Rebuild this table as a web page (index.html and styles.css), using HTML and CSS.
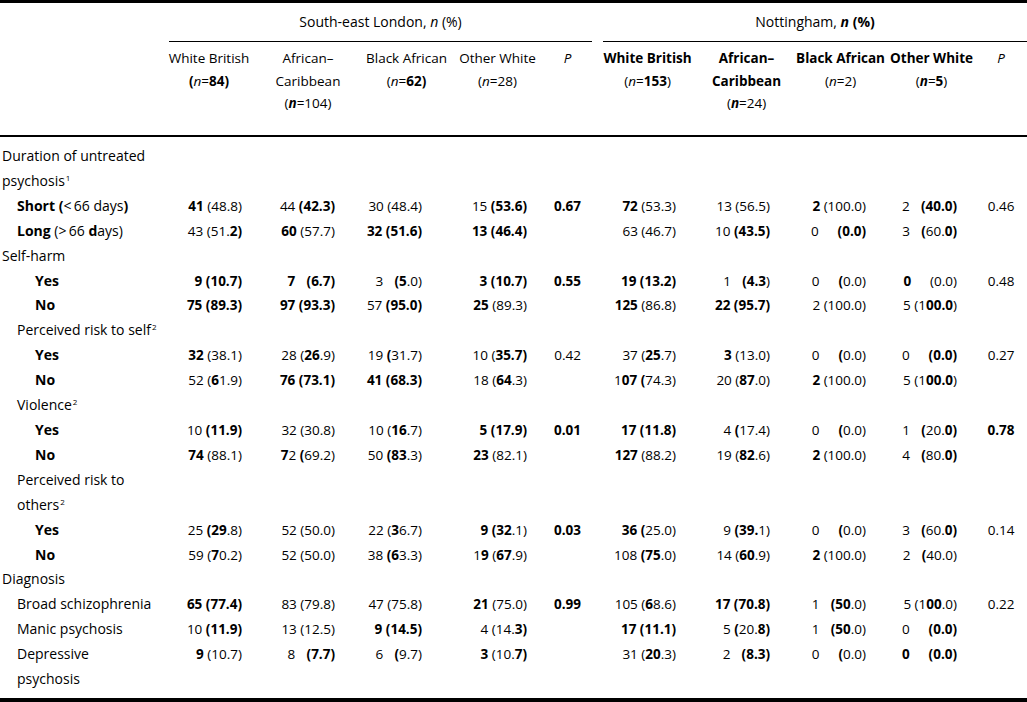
FILE: index.html
```html
<!DOCTYPE html>
<html lang="en">
<head>
<meta charset="utf-8">
<title>Table</title>
<link rel="stylesheet" href="styles.css">
</head>
<body>
<table class="tbl">
  <colgroup>
    <col class="w-lab"><col class="w-s1"><col class="w-s2"><col class="w-s3"><col class="w-s4"><col class="w-sp">
    <col class="w-n1"><col class="w-n2"><col class="w-n3"><col class="w-n4"><col class="w-np">
  </colgroup>
  <thead>
    <tr class="grp">
      <th></th>
      <th colspan="5" class="grp-se"><div class="grp-line">South-east London, <i>n</i> (%)</div></th>
      <th colspan="5" class="grp-nt"><div class="grp-line">Nottingham, <b><i>n</i> (%)</b></div></th>
    </tr>
    <tr class="cols">
      <th></th>
      <th>White British<br><b>(</b><i>n</i>=<b>84)</b></th>
      <th>African–<br>Caribbean<br>(<b><i>n</i></b>=104)</th>
      <th>Black African<br>(<i>n</i>=<b>62)</b></th>
      <th>Other White<br>(<i>n</i>=28)</th>
      <th><i>P</i></th>
      <th><b>White British</b><br>(<i>n</i>=<b>153</b>)</th>
      <th><b>African–</b><br><b>Caribbean</b><br>(<b><i>n</i></b>=24)</th>
      <th><b>Black African</b><br>(<i>n</i>=2)</th>
      <th><b>Other White</b><br>(<b><i>n</i></b>=<b>5</b>)</th>
      <th><i>P</i></th>
    </tr>
  </thead>
  <tbody>
    <tr class="first">
      <td class="lab l1">Duration of untreated<br>psychosis<sup>1</sup></td>
      <td></td><td></td><td></td><td></td><td></td><td></td><td></td><td></td><td></td><td></td>
    </tr>
    <tr>
      <td class="lab l2"><b>Short (</b>&lt;&#8201;66 days<b>)</b></td>
      <td class="s1"><b>41</b> (48.8)</td><td class="s2">44 <b>(42.3)</b></td><td class="s3">30 (48.4)</td><td class="s4">15 <b>(53.6)</b></td><td class="p"><b>0.67</b></td>
      <td class="n1"><b>72</b> (53.3)</td><td class="n2">13 (56.5)</td><td class="n3"><b>2</b> (100.0)</td><td class="n4">2 &#8199;<b>(40.0)</b></td><td class="p">0.46</td>
    </tr>
    <tr>
      <td class="lab l2"><b>Long</b> (&gt;&#8201;66 <b>d</b>ays)</td>
      <td class="s1">43 (51.<b>2)</b></td><td class="s2"><b>60</b> (57.7)</td><td class="s3"><b>32 (51.6)</b></td><td class="s4"><b>13 (46.4)</b></td><td class="p"></td>
      <td class="n1">63 (46.7)</td><td class="n2">10 <b>(43.5)</b></td><td class="n3">0 &#8199;&#8199;<b>(0.0)</b></td><td class="n4">3 &#8199;<b>(</b>60.<b>0)</b></td><td class="p"></td>
    </tr>
    <tr>
      <td class="lab l1">Self-harm</td>
      <td></td><td></td><td></td><td></td><td></td><td></td><td></td><td></td><td></td><td></td>
    </tr>
    <tr>
      <td class="lab l3"><b>Yes</b></td>
      <td class="s1"><b>9 (10.7)</b></td><td class="s2"><b>7 &#8199;(6.7)</b></td><td class="s3">3 &#8199;<b>(5</b>.0)</td><td class="s4"><b>3 (10.7)</b></td><td class="p"><b>0.55</b></td>
      <td class="n1"><b>19 (13.2)</b></td><td class="n2">1 &#8199;<b>(4.3</b>)</td><td class="n3">0 &#8199;&#8199;<b>(</b>0.0)</td><td class="n4"><b>0</b> &#8199;&#8199;(0.0)</td><td class="p">0.48</td>
    </tr>
    <tr>
      <td class="lab l3"><b>No</b></td>
      <td class="s1"><b>75 (89.3)</b></td><td class="s2"><b>97 (93.3)</b></td><td class="s3">57 <b>(95.0)</b></td><td class="s4"><b>25</b> (89.3)</td><td class="p"></td>
      <td class="n1"><b>125</b> (86.8)</td><td class="n2"><b>22 (95.7)</b></td><td class="n3">2 (100.0)</td><td class="n4">5 (1<b>00.0</b>)</td><td class="p"></td>
    </tr>
    <tr>
      <td class="lab l2">Perceived risk to self<sup>2</sup></td>
      <td></td><td></td><td></td><td></td><td></td><td></td><td></td><td></td><td></td><td></td>
    </tr>
    <tr>
      <td class="lab l3"><b>Yes</b></td>
      <td class="s1"><b>32</b> (38.1)</td><td class="s2">28 (<b>26</b>.9)</td><td class="s3">19 <b>(</b>31.7)</td><td class="s4">10 (<b>35.7)</b></td><td class="p">0.42</td>
      <td class="n1">37 (<b>25</b>.7)</td><td class="n2"><b>3</b> (13.0)</td><td class="n3">0 &#8199;&#8199;<b>(</b>0.0)</td><td class="n4">0 &#8199;&#8199;<b>(0.0)</b></td><td class="p">0.27</td>
    </tr>
    <tr>
      <td class="lab l3"><b>No</b></td>
      <td class="s1">52 (<b>6</b>1.9)</td><td class="s2"><b>76 (73.1)</b></td><td class="s3"><b>41 (68.3)</b></td><td class="s4">18 (<b>64</b>.3)</td><td class="p"></td>
      <td class="n1">1<b>07 (</b>74.3)</td><td class="n2">20 (<b>87</b>.0)</td><td class="n3"><b>2</b> (100.0)</td><td class="n4">5 (1<b>00.0</b>)</td><td class="p"></td>
    </tr>
    <tr>
      <td class="lab l2">Violence<sup>2</sup></td>
      <td></td><td></td><td></td><td></td><td></td><td></td><td></td><td></td><td></td><td></td>
    </tr>
    <tr>
      <td class="lab l3"><b>Yes</b></td>
      <td class="s1">10 <b>(11.9)</b></td><td class="s2">32 (30.8)</td><td class="s3">10 (<b>16</b>.7)</td><td class="s4"><b>5 (17.9)</b></td><td class="p"><b>0.01</b></td>
      <td class="n1"><b>17 (11.8)</b></td><td class="n2">4 <b>(</b>17.4)</td><td class="n3">0 &#8199;&#8199;<b>(</b>0.0)</td><td class="n4">1 &#8199;<b>(</b>20.<b>0)</b></td><td class="p"><b>0.78</b></td>
    </tr>
    <tr>
      <td class="lab l3"><b>No</b></td>
      <td class="s1"><b>74</b> (88.1)</td><td class="s2"><b>7</b>2 <b>(</b>69.2)</td><td class="s3">50 <b>(83</b>.3)</td><td class="s4"><b>23</b> (82.1)</td><td class="p"></td>
      <td class="n1"><b>127</b> (88.2)</td><td class="n2">19 (<b>82</b>.6)</td><td class="n3"><b>2</b> (100.0)</td><td class="n4">4 &#8199;<b>(</b>80.<b>0)</b></td><td class="p"></td>
    </tr>
    <tr>
      <td class="lab l2">Perceived risk to<br>others<sup>2</sup></td>
      <td></td><td></td><td></td><td></td><td></td><td></td><td></td><td></td><td></td><td></td>
    </tr>
    <tr>
      <td class="lab l3"><b>Yes</b></td>
      <td class="s1">25 <b>(29</b>.8)</td><td class="s2">52 (50.0)</td><td class="s3">22 (<b>3</b>6.7)</td><td class="s4"><b>9 (32</b>.1)</td><td class="p"><b>0.03</b></td>
      <td class="n1"><b>36 (</b>25.0)</td><td class="n2">9 <b>(39.</b>1)</td><td class="n3">0 &#8199;&#8199;<b>(</b>0.0)</td><td class="n4">3 &#8199;<b>(</b>60.<b>0)</b></td><td class="p">0.14</td>
    </tr>
    <tr>
      <td class="lab l3"><b>No</b></td>
      <td class="s1">59 (<b>7</b>0.2)</td><td class="s2">52 (50.0)</td><td class="s3">38 <b>(6</b>3.3)</td><td class="s4">1<b>9</b> (<b>67</b>.9)</td><td class="p"></td>
      <td class="n1">108 <b>(75</b>.0)</td><td class="n2">14 (<b>60</b>.9)</td><td class="n3"><b>2</b> (100.0)</td><td class="n4">2 &#8199;<b>(</b>40.0)</td><td class="p"></td>
    </tr>
    <tr>
      <td class="lab l1">Diagnosis</td>
      <td></td><td></td><td></td><td></td><td></td><td></td><td></td><td></td><td></td><td></td>
    </tr>
    <tr>
      <td class="lab l2">Broad schizophrenia</td>
      <td class="s1"><b>65 (77.4)</b></td><td class="s2">83 (79.8)</td><td class="s3">47 (75.8)</td><td class="s4"><b>21</b> (75.0)</td><td class="p"><b>0.99</b></td>
      <td class="n1">105 (<b>6</b>8.6)</td><td class="n2"><b>17 (70.8)</b></td><td class="n3">1 &#8199;<b>(50</b>.0)</td><td class="n4">5 (1<b>00</b>.0)</td><td class="p">0.22</td>
    </tr>
    <tr>
      <td class="lab l2">Manic psychosis</td>
      <td class="s1">10 <b>(11.9)</b></td><td class="s2">13 (12.5)</td><td class="s3"><b>9 (14.5)</b></td><td class="s4">4 (14.<b>3)</b></td><td class="p"></td>
      <td class="n1"><b>17 (11.1)</b></td><td class="n2">5 <b>(</b>20.<b>8)</b></td><td class="n3">1 &#8199;<b>(50</b>.0)</td><td class="n4">0 &#8199;&#8199;<b>(0.0)</b></td><td class="p"></td>
    </tr>
    <tr class="last">
      <td class="lab l2">Depressive<br>psychosis</td>
      <td class="s1"><b>9</b> (10.7)</td><td class="s2">8 &#8199;<b>(7.7)</b></td><td class="s3">6 &#8199;<b>(</b>9.7)</td><td class="s4"><b>3</b> (10.<b>7)</b></td><td class="p"></td>
      <td class="n1">31 (<b>20</b>.3)</td><td class="n2">2 &#8199;<b>(8.3)</b></td><td class="n3">0 &#8199;&#8199;<b>(</b>0.0)</td><td class="n4"><b>0 &#8199;&#8199;(0.0)</b></td><td class="p"></td>
    </tr>
  </tbody>
</table>
</body>
</html>
```

FILE: styles.css
```css
html, body {
  margin: 0;
  padding: 0;
  background: #ffffff;
}

body {
  font-family: "Gill Sans", "Gill Sans MT", "Open Sans", Lato, sans-serif;
  font-size: 14px;
  color: #000000;
}

.tbl {
  width: 1027px;
  border-collapse: separate;
  border-spacing: 0;
  table-layout: fixed;
  border-top: 3px solid #000;
  border-bottom: 5px solid #000;
}

.w-lab { width: 160px; }
.w-s1 { width: 98px; }
.w-s2 { width: 100px; }
.w-s3 { width: 97px; }
.w-s4 { width: 85px; }
.w-sp { width: 55px; }
.w-n1 { width: 105px; }
.w-n2 { width: 93px; }
.w-n3 { width: 95px; }
.w-n4 { width: 87px; }
.w-np { width: 52px; }

th {
  font-weight: normal;
  padding: 0;
}

b {
  font-weight: 700;
}

.grp th {
  line-height: 22px;
  text-align: center;
  vertical-align: top;
}

.grp-se {
  padding: 8px 3px 0 9px;
}

.grp-nt {
  padding: 8px 0 0 8px;
}

.grp-line {
  padding-bottom: 8px;
  border-bottom: 1px solid #000;
}

.cols th {
  font-size: 13.5px;
  line-height: 22.5px;
  text-align: center;
  vertical-align: top;
  padding: 5px 0 20px;
  border-bottom: 2px solid #000;
  white-space: nowrap;
}

td {
  padding: 0;
  font-size: 13.5px;
  line-height: 24.9px;
  vertical-align: top;
  white-space: nowrap;
  text-align: right;
}

.first td {
  padding-top: 7.5px;
}

.last td {
  padding-bottom: 6px;
}

td.lab {
  font-size: 14px;
  text-align: left;
}

.l1 { padding-left: 2px; }
.l2 { padding-left: 17px; }
.l3 { padding-left: 35px; }

sup {
  font-size: 8px;
  line-height: 0;
  vertical-align: 5px;
  margin-left: 1px;
}

.s1 { padding-right: 16px; }
.s2 { padding-right: 23px; }
.s3 { padding-right: 33px; }
.s4 { padding-right: 13px; }
.n1 { padding-right: 24px; }
.n2 { padding-right: 23px; }
.n3 { padding-right: 22px; }
.n4 { padding-right: 18px; }

td.p {
  text-align: center;
}
```
